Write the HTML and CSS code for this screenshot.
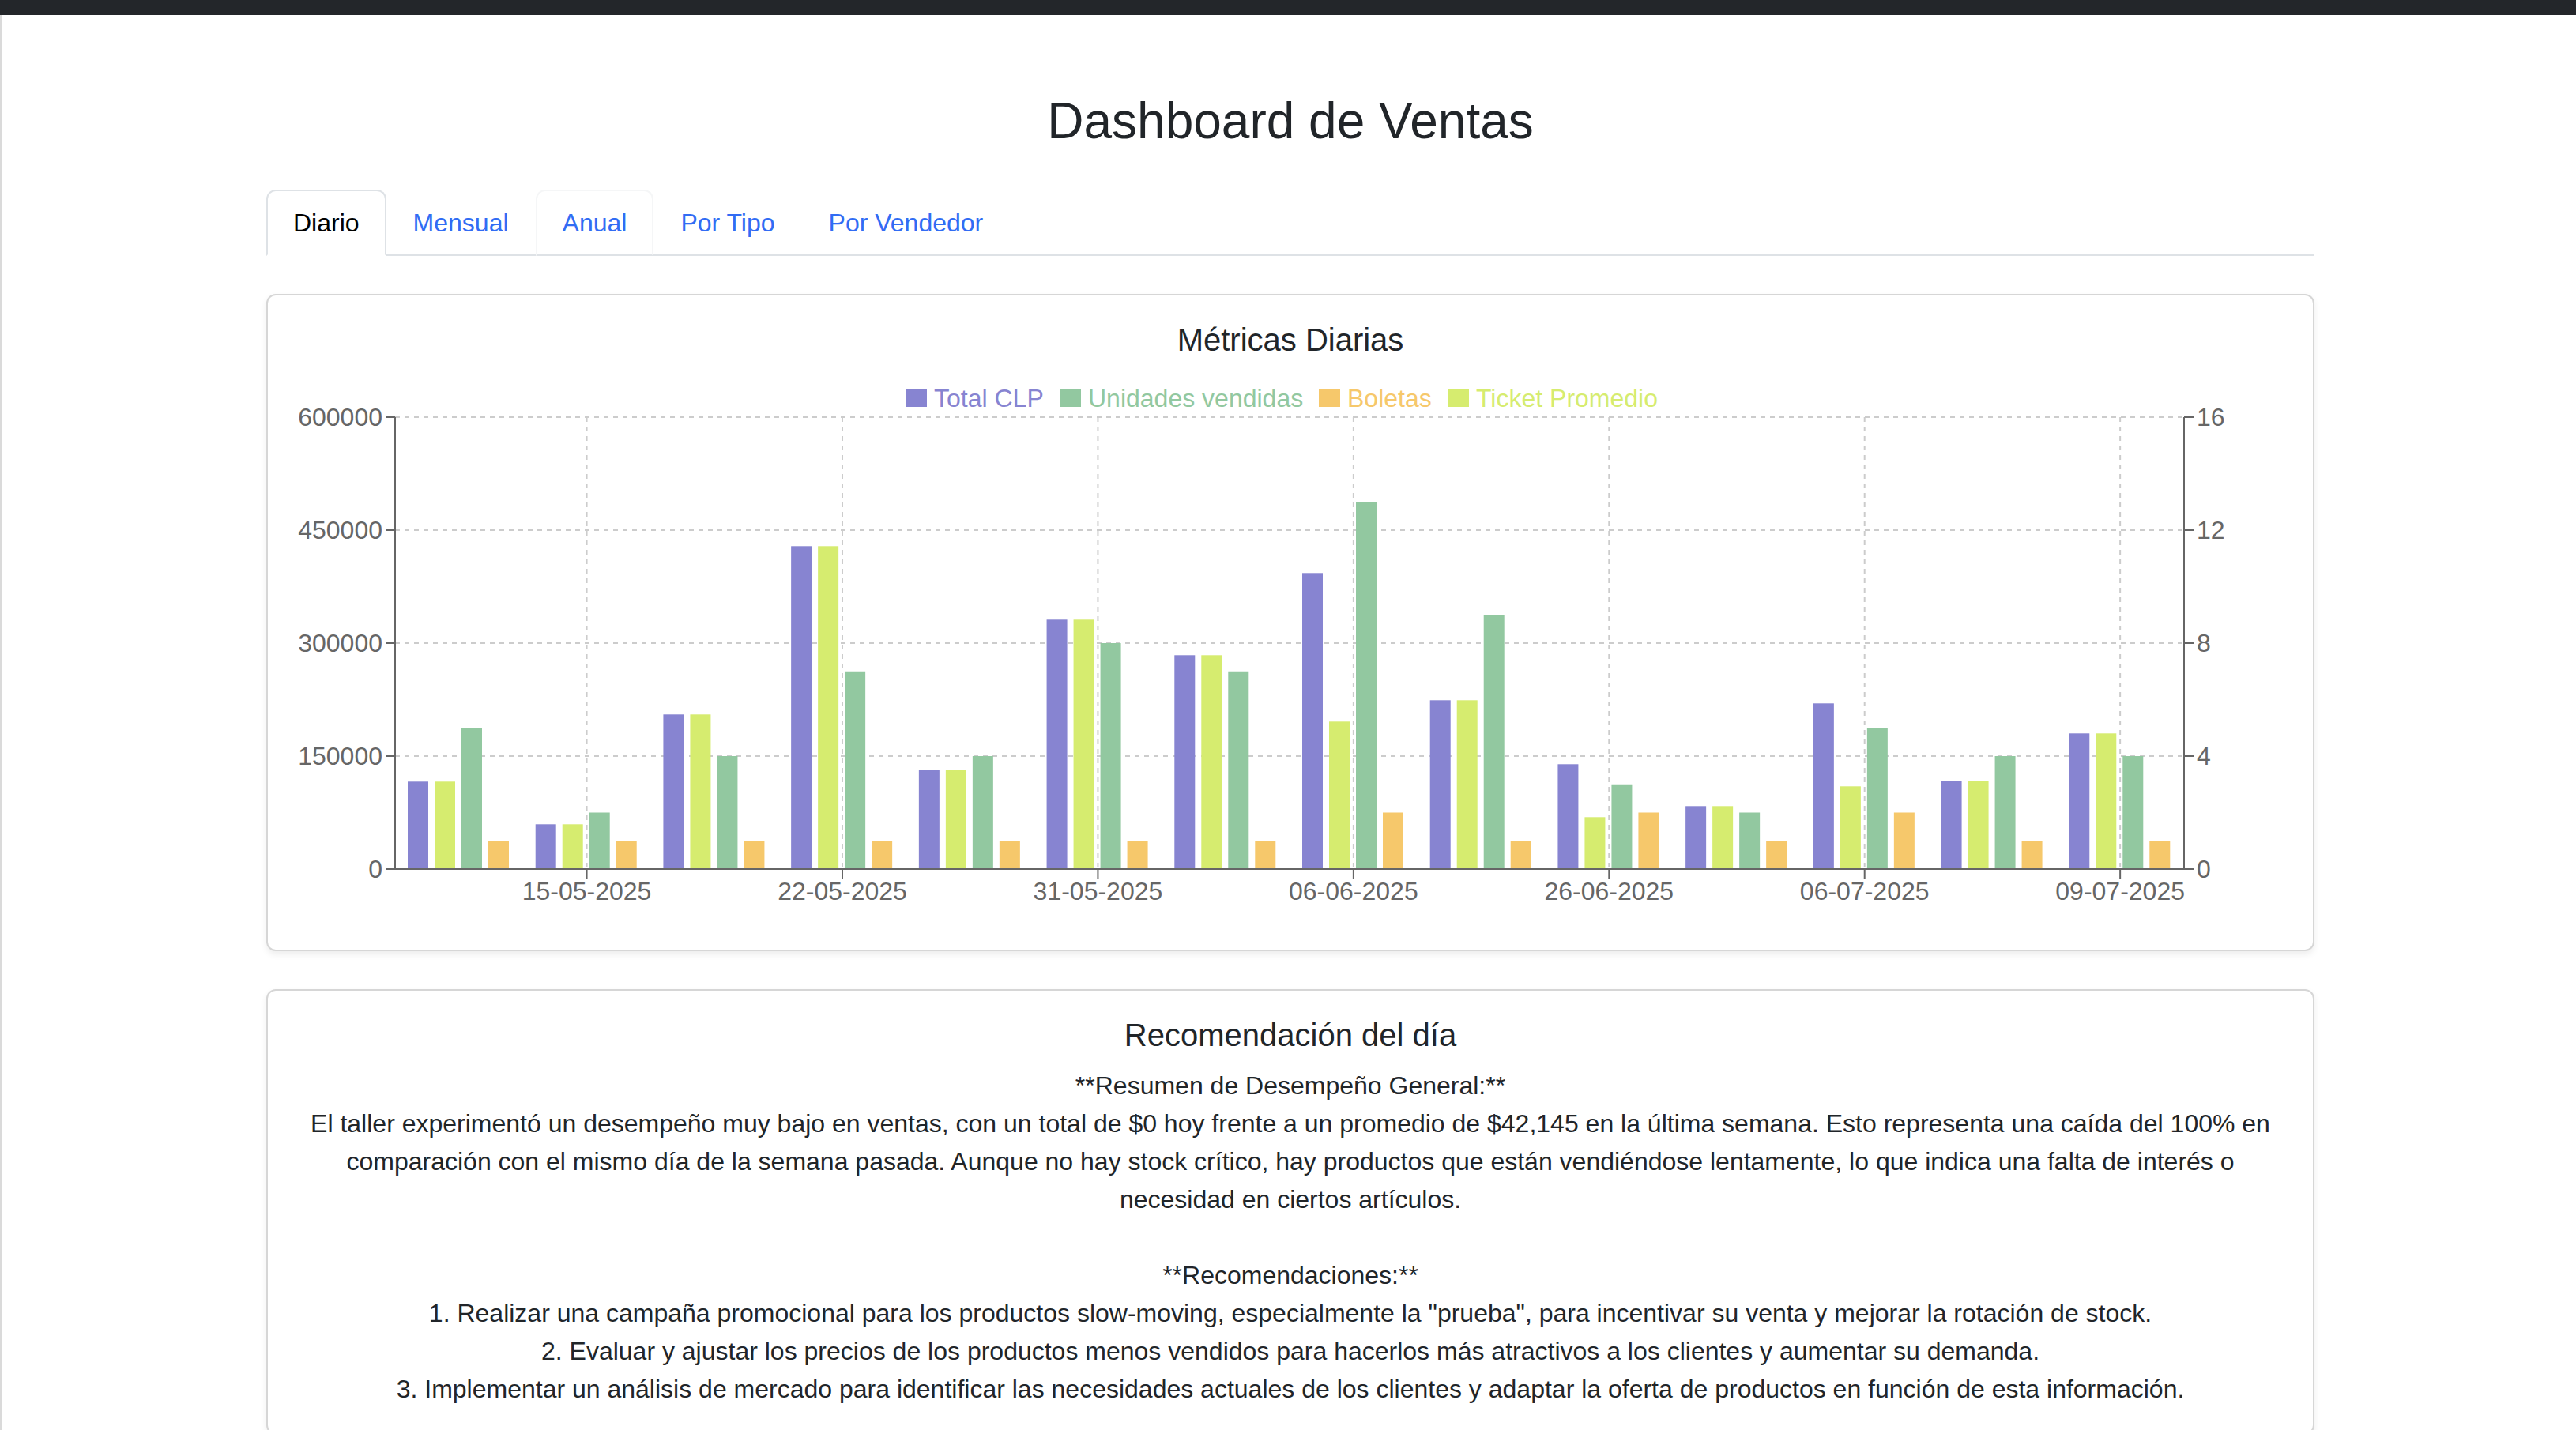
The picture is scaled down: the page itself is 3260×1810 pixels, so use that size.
FILE: index.html
```html
<!DOCTYPE html>
<html lang="es">
<head>
<meta charset="utf-8">
<title>Dashboard de Ventas</title>
<link rel="stylesheet" href="styles.css">
</head>
<body>
<div class="topbar"></div>
<div class="page">
  <div class="container">
    <h2 class="page-title">Dashboard de Ventas</h2>
    <ul class="tabs">
      <li><a class="tab active" href="#">Diario</a></li>
      <li><a class="tab" href="#">Mensual</a></li>
      <li><a class="tab hover" href="#">Anual</a></li>
      <li><a class="tab" href="#">Por Tipo</a></li>
      <li><a class="tab" href="#">Por Vendedor</a></li>
    </ul>

    <div class="card">
      <div class="card-body">
        <h5 class="card-title">Métricas Diarias</h5>
        <svg class="chart" width="2524" height="700" viewBox="0 0 2524 700" xmlns="http://www.w3.org/2000/svg">
          <g class="legend">
            <rect x="775" y="23" width="27" height="22" fill="#8784d1"/>
            <text x="811" y="45" fill="#8784d1">Total CLP</text>
            <rect x="970" y="23" width="27" height="22" fill="#92c8a0"/>
            <text x="1006" y="45" fill="#92c8a0">Unidades vendidas</text>
            <rect x="1298" y="23" width="27" height="22" fill="#f6c86b"/>
            <text x="1334" y="45" fill="#f6c86b">Boletas</text>
            <rect x="1461" y="23" width="27" height="22" fill="#d6ec6f"/>
            <text x="1497" y="45" fill="#d6ec6f">Ticket Promedio</text>
          </g>
          <g class="grid">
            <line x1="129" y1="58" x2="2393" y2="58"/>
            <line x1="129" y1="201" x2="2393" y2="201"/>
            <line x1="129" y1="344" x2="2393" y2="344"/>
            <line x1="129" y1="487" x2="2393" y2="487"/>
            <line x1="371.57" y1="58" x2="371.57" y2="630"/>
            <line x1="695" y1="58" x2="695" y2="630"/>
            <line x1="1018.43" y1="58" x2="1018.43" y2="630"/>
            <line x1="1341.86" y1="58" x2="1341.86" y2="630"/>
            <line x1="1665.29" y1="58" x2="1665.29" y2="630"/>
            <line x1="1988.71" y1="58" x2="1988.71" y2="630"/>
            <line x1="2312.14" y1="58" x2="2312.14" y2="630"/>
          </g>
          <g class="bars">
            <rect class="b-total" x="145" y="519.3" width="26" height="110.7"/>
            <rect class="b-ticket" x="179" y="519.3" width="26" height="110.7"/>
            <rect class="b-units" x="213" y="451.25" width="26" height="178.75"/>
            <rect class="b-bol" x="247" y="594.25" width="26" height="35.75"/>

            <rect class="b-total" x="306.71" y="573.3" width="26" height="56.7"/>
            <rect class="b-ticket" x="340.71" y="573.3" width="26" height="56.7"/>
            <rect class="b-units" x="374.71" y="558.5" width="26" height="71.5"/>
            <rect class="b-bol" x="408.71" y="594.25" width="26" height="35.75"/>

            <rect class="b-total" x="468.43" y="434.3" width="26" height="195.7"/>
            <rect class="b-ticket" x="502.43" y="434.3" width="26" height="195.7"/>
            <rect class="b-units" x="536.43" y="487" width="26" height="143"/>
            <rect class="b-bol" x="570.43" y="594.25" width="26" height="35.75"/>

            <rect class="b-total" x="630.14" y="221.3" width="26" height="408.7"/>
            <rect class="b-ticket" x="664.14" y="221.3" width="26" height="408.7"/>
            <rect class="b-units" x="698.14" y="379.75" width="26" height="250.25"/>
            <rect class="b-bol" x="732.14" y="594.25" width="26" height="35.75"/>

            <rect class="b-total" x="791.86" y="504.3" width="26" height="125.7"/>
            <rect class="b-ticket" x="825.86" y="504.3" width="26" height="125.7"/>
            <rect class="b-units" x="859.86" y="487" width="26" height="143"/>
            <rect class="b-bol" x="893.86" y="594.25" width="26" height="35.75"/>

            <rect class="b-total" x="953.57" y="314.3" width="26" height="315.7"/>
            <rect class="b-ticket" x="987.57" y="314.3" width="26" height="315.7"/>
            <rect class="b-units" x="1021.57" y="344" width="26" height="286"/>
            <rect class="b-bol" x="1055.57" y="594.25" width="26" height="35.75"/>

            <rect class="b-total" x="1115.29" y="359.3" width="26" height="270.7"/>
            <rect class="b-ticket" x="1149.29" y="359.3" width="26" height="270.7"/>
            <rect class="b-units" x="1183.29" y="379.75" width="26" height="250.25"/>
            <rect class="b-bol" x="1217.29" y="594.25" width="26" height="35.75"/>

            <rect class="b-total" x="1277" y="255.3" width="26" height="374.7"/>
            <rect class="b-ticket" x="1311" y="443.3" width="26" height="186.7"/>
            <rect class="b-units" x="1345" y="165.25" width="26" height="464.75"/>
            <rect class="b-bol" x="1379" y="558.5" width="26" height="71.5"/>

            <rect class="b-total" x="1438.71" y="416.3" width="26" height="213.7"/>
            <rect class="b-ticket" x="1472.71" y="416.3" width="26" height="213.7"/>
            <rect class="b-units" x="1506.71" y="308.25" width="26" height="321.75"/>
            <rect class="b-bol" x="1540.71" y="594.25" width="26" height="35.75"/>

            <rect class="b-total" x="1600.43" y="497.3" width="26" height="132.7"/>
            <rect class="b-ticket" x="1634.43" y="564.3" width="26" height="65.7"/>
            <rect class="b-units" x="1668.43" y="522.75" width="26" height="107.25"/>
            <rect class="b-bol" x="1702.43" y="558.5" width="26" height="71.5"/>

            <rect class="b-total" x="1762.14" y="550.3" width="26" height="79.7"/>
            <rect class="b-ticket" x="1796.14" y="550.3" width="26" height="79.7"/>
            <rect class="b-units" x="1830.14" y="558.5" width="26" height="71.5"/>
            <rect class="b-bol" x="1864.14" y="594.25" width="26" height="35.75"/>

            <rect class="b-total" x="1923.86" y="420.3" width="26" height="209.7"/>
            <rect class="b-ticket" x="1957.86" y="525.3" width="26" height="104.7"/>
            <rect class="b-units" x="1991.86" y="451.25" width="26" height="178.75"/>
            <rect class="b-bol" x="2025.86" y="558.5" width="26" height="71.5"/>

            <rect class="b-total" x="2085.57" y="518.3" width="26" height="111.7"/>
            <rect class="b-ticket" x="2119.57" y="518.3" width="26" height="111.7"/>
            <rect class="b-units" x="2153.57" y="487" width="26" height="143"/>
            <rect class="b-bol" x="2187.57" y="594.25" width="26" height="35.75"/>

            <rect class="b-total" x="2247.29" y="458.3" width="26" height="171.7"/>
            <rect class="b-ticket" x="2281.29" y="458.3" width="26" height="171.7"/>
            <rect class="b-units" x="2315.29" y="487" width="26" height="143"/>
            <rect class="b-bol" x="2349.29" y="594.25" width="26" height="35.75"/>
          </g>
          <g class="axis">
            <line x1="129" y1="58" x2="129" y2="630"/>
            <line x1="2393" y1="58" x2="2393" y2="630"/>
            <line x1="129" y1="630" x2="2393" y2="630"/>
            <line x1="117" y1="58" x2="129" y2="58"/>
            <line x1="117" y1="201" x2="129" y2="201"/>
            <line x1="117" y1="344" x2="129" y2="344"/>
            <line x1="117" y1="487" x2="129" y2="487"/>
            <line x1="117" y1="630" x2="129" y2="630"/>
            <line x1="2393" y1="58" x2="2405" y2="58"/>
            <line x1="2393" y1="201" x2="2405" y2="201"/>
            <line x1="2393" y1="344" x2="2405" y2="344"/>
            <line x1="2393" y1="487" x2="2405" y2="487"/>
            <line x1="2393" y1="630" x2="2405" y2="630"/>
            <line x1="371.57" y1="630" x2="371.57" y2="642"/>
            <line x1="695" y1="630" x2="695" y2="642"/>
            <line x1="1018.43" y1="630" x2="1018.43" y2="642"/>
            <line x1="1341.86" y1="630" x2="1341.86" y2="642"/>
            <line x1="1665.29" y1="630" x2="1665.29" y2="642"/>
            <line x1="1988.71" y1="630" x2="1988.71" y2="642"/>
            <line x1="2312.14" y1="630" x2="2312.14" y2="642"/>
          </g>
          <g class="ticks-left">
            <text x="113" y="58" dy="0.355em">600000</text>
            <text x="113" y="201" dy="0.355em">450000</text>
            <text x="113" y="344" dy="0.355em">300000</text>
            <text x="113" y="487" dy="0.355em">150000</text>
            <text x="113" y="630" dy="0.355em">0</text>
          </g>
          <g class="ticks-right">
            <text x="2409" y="58" dy="0.355em">16</text>
            <text x="2409" y="201" dy="0.355em">12</text>
            <text x="2409" y="344" dy="0.355em">8</text>
            <text x="2409" y="487" dy="0.355em">4</text>
            <text x="2409" y="630" dy="0.355em">0</text>
          </g>
          <g class="ticks-x">
            <text x="371.57" y="646" dy="0.71em">15-05-2025</text>
            <text x="695" y="646" dy="0.71em">22-05-2025</text>
            <text x="1018.43" y="646" dy="0.71em">31-05-2025</text>
            <text x="1341.86" y="646" dy="0.71em">06-06-2025</text>
            <text x="1665.29" y="646" dy="0.71em">26-06-2025</text>
            <text x="1988.71" y="646" dy="0.71em">06-07-2025</text>
            <text x="2312.14" y="646" dy="0.71em">09-07-2025</text>
          </g>
        </svg>
      </div>
    </div>

    <div class="card">
      <div class="card-body">
        <h5 class="card-title">Recomendación del día</h5>
        <div class="rec-text">**Resumen de Desempeño General:**
El taller experimentó un desempeño muy bajo en ventas, con un total de $0 hoy frente a un promedio de $42,145 en la última semana. Esto representa una caída del 100% en comparación con el mismo día de la semana pasada. Aunque no hay stock crítico, hay productos que están vendiéndose lentamente, lo que indica una falta de interés o necesidad en ciertos artículos.

**Recomendaciones:**
1. Realizar una campaña promocional para los productos slow-moving, especialmente la "prueba", para incentivar su venta y mejorar la rotación de stock.
2. Evaluar y ajustar los precios de los productos menos vendidos para hacerlos más atractivos a los clientes y aumentar su demanda.
3. Implementar un análisis de mercado para identificar las necesidades actuales de los clientes y adaptar la oferta de productos en función de esta información.</div>
      </div>
    </div>
  </div>
</div>
</body>
</html>
```

FILE: styles.css
```css
html {
  scrollbar-width: none;
}

body {
  margin: 0;
  background: #fff;
  color: #212529;
  font-family: "Liberation Sans", Arial, Helvetica, sans-serif;
  font-size: 32px;
  line-height: 1.5;
}

.topbar {
  height: 19px;
  background: #23262a;
}

.page {
  padding: 96px 0 96px 4px;
  border-left: 2px solid #dadada;
}

.container {
  width: 2592px;
  margin: 0 auto;
}

.page-title {
  margin: 0 0 48px;
  font-size: 64px;
  font-weight: 400;
  line-height: 1.2;
  text-align: center;
  color: #212529;
}

.tabs {
  display: flex;
  margin: 0;
  padding: 0;
  list-style: none;
  border-bottom: 2px solid #dee2e6;
}

.tab {
  display: block;
  margin-bottom: -2px;
  padding: 16px 32px;
  border: 2px solid transparent;
  border-radius: 12px 12px 0 0;
  color: #316cf4;
  text-decoration: none;
  line-height: 48px;
}

.tab.active {
  color: #000;
  background: #fff;
  border-color: #dee2e6 #dee2e6 #fff;
}

.tab.hover {
  border-color: #f5f6f7 #f5f6f7 #dee2e6;
}

.card {
  margin-top: 48px;
  background: #fff;
  border: 2px solid #d6d6d6;
  border-radius: 12px;
  box-shadow: 0 4px 8px rgba(0, 0, 0, 0.075);
}

.card-body {
  padding: 32px;
}

.card-title {
  margin: 0 0 16px;
  font-size: 40px;
  font-weight: 400;
  line-height: 1.2;
  text-align: center;
  color: #212529;
}

.rec-text {
  white-space: pre-line;
  text-align: center;
}

.chart {
  display: block;
  font-family: "Liberation Sans", Arial, Helvetica, sans-serif;
  font-size: 32px;
}

.grid line {
  stroke: #ccc;
  stroke-width: 2;
  stroke-dasharray: 6 6;
}

.axis line {
  stroke: #666;
  stroke-width: 2;
}

.ticks-left text,
.ticks-right text,
.ticks-x text {
  fill: #666;
}

.ticks-left text {
  text-anchor: end;
}

.ticks-x text {
  text-anchor: middle;
}

.b-total { fill: #8784d1; }
.b-ticket { fill: #d6ec6f; }
.b-units { fill: #92c8a0; }
.b-bol { fill: #f6c86b; }
```
